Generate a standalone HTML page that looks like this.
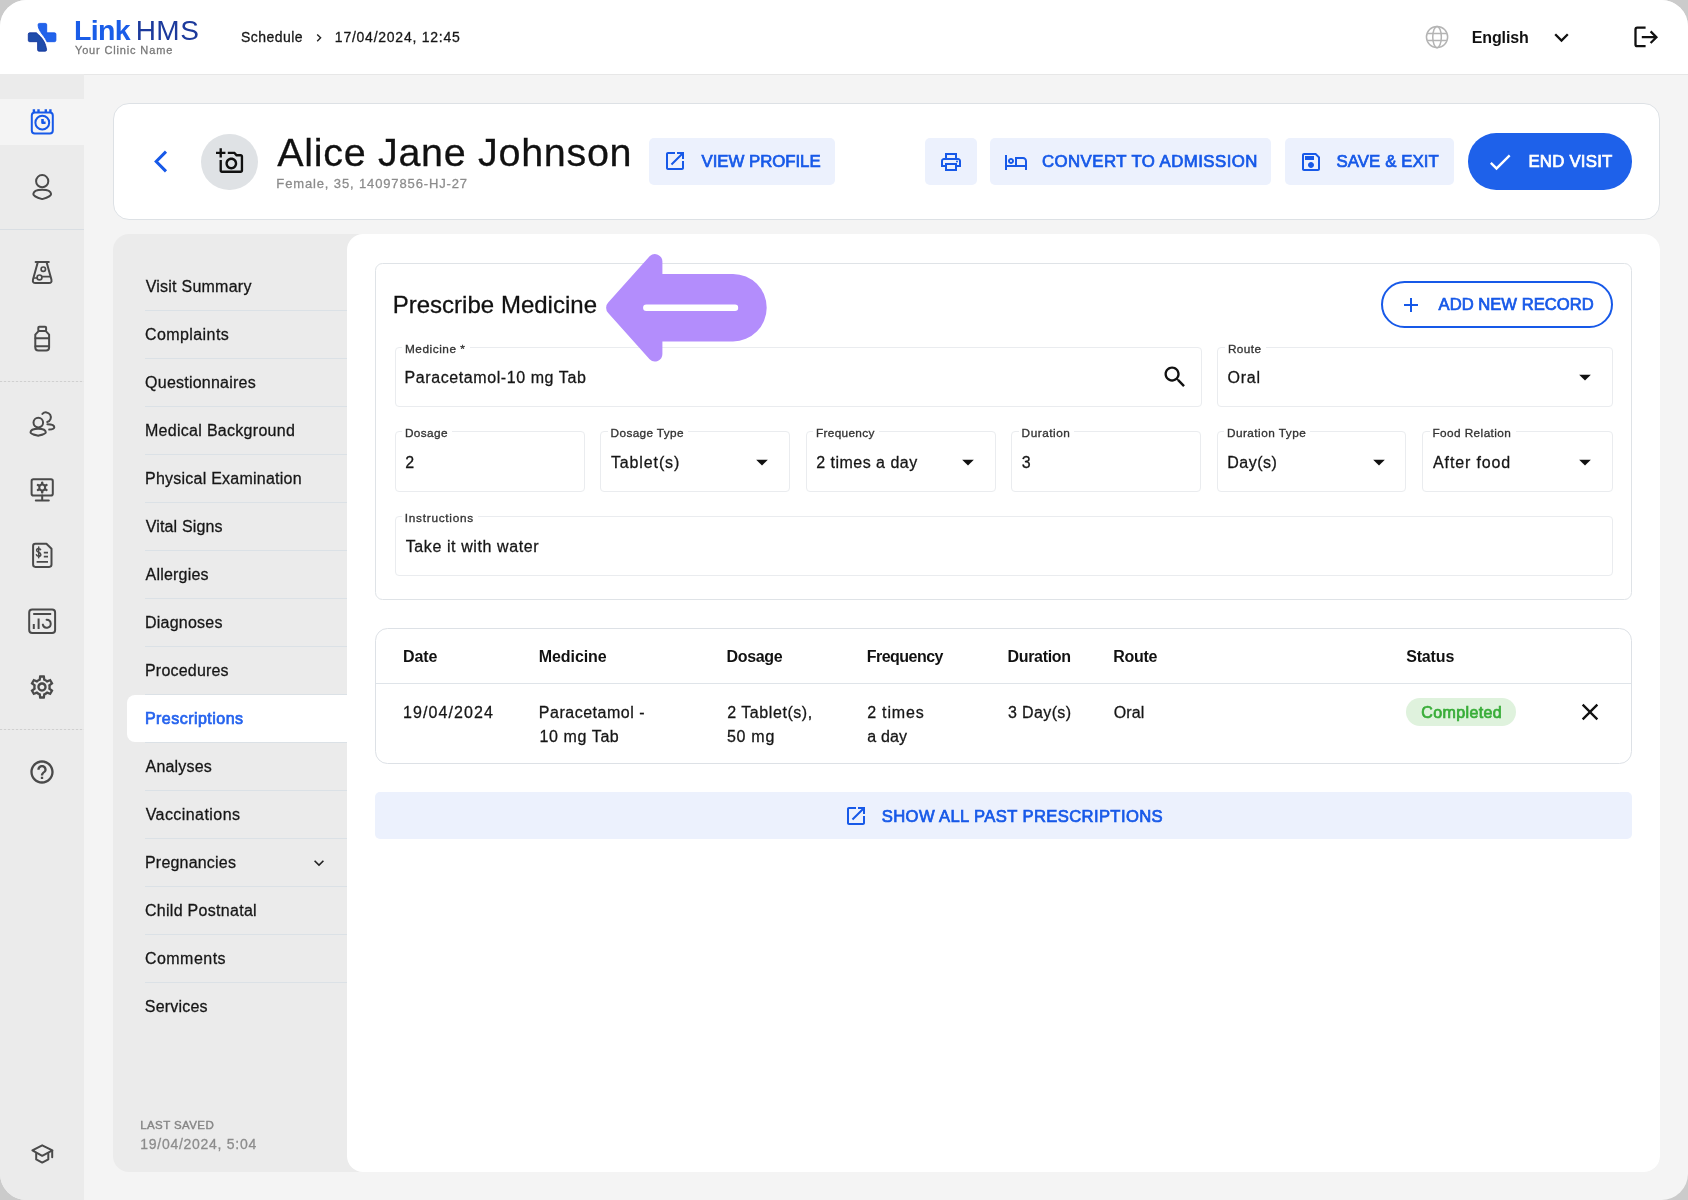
<!DOCTYPE html>
<html lang="en">
<head>
<meta charset="utf-8">
<title>Link HMS - Visit</title>
<style>
*{box-sizing:border-box;margin:0;padding:0}
html,body{width:1688px;height:1200px;overflow:hidden;background:#cbcbcb;font-family:"Liberation Sans",sans-serif;}
#app{position:absolute;left:0;top:0;width:1688px;height:1200px;background:#f4f4f4;border-radius:26.5px;overflow:hidden}
.abs{position:absolute}
.t{position:absolute;white-space:nowrap;line-height:1}
#tx{position:absolute;left:0;top:0;width:1688px;height:1200px;will-change:transform}
svg{position:absolute;overflow:visible}
.hdr{left:0;top:0;width:1688px;height:74.6px;background:#fff;border-bottom:1.4px solid #e7e7e7}
.side{left:0;top:74px;width:84px;height:1126px;background:#ebebeb}
.card{background:#fff;border:1px solid #e0e0e0}
.btn{background:#ecf1fd;border-radius:5px}
.fld{border:1px solid #eaecef;border-radius:4px;background:#fff}
.lbl{position:absolute;background:#fff;height:4px}
.hr{background:#dde2e7;height:1px}
</style>
</head>
<body>
<div id="app">
<!-- header -->
<div class="abs hdr"></div>
<!-- sidebar -->
<div class="abs side"></div>
<div class="abs" style="left:0;top:98.7px;width:84px;height:46.5px;background:#f4f4f4"></div>
<div class="abs hr" style="left:0;top:229px;width:84px;background:#d9dee3"></div>
<div class="abs" style="left:0;top:381px;width:84px;height:1px;background:repeating-linear-gradient(90deg,#d0d0d0 0 2px,#e6e6e6 2px 4px)"></div>
<div class="abs" style="left:0;top:729px;width:84px;height:1px;background:repeating-linear-gradient(90deg,#d0d0d0 0 2px,#e6e6e6 2px 4px)"></div>

<!-- patient card -->
<div class="abs card" style="left:112.8px;top:103px;width:1547.2px;height:117px;border-radius:16px;border-color:#dde1e5"></div>
<div class="abs" style="left:201.4px;top:133.5px;width:56.4px;height:56.4px;border-radius:50%;background:#dfe2e5"></div>
<div class="abs btn" style="left:649px;top:138px;width:186px;height:47px"></div>
<div class="abs btn" style="left:925px;top:138px;width:51.5px;height:47px"></div>
<div class="abs btn" style="left:990.4px;top:138px;width:280.5px;height:47px"></div>
<div class="abs btn" style="left:1284.8px;top:138px;width:169px;height:47px"></div>
<div class="abs" style="left:1467.5px;top:133.3px;width:164.5px;height:56.4px;border-radius:28.2px;background:#1e61ea"></div>

<!-- visit panel -->
<div class="abs" style="left:113px;top:234px;width:1547px;height:938px;border-radius:16px;background:#ebebeb"></div>
<div class="abs" style="left:347px;top:234px;width:1313px;height:938px;border-radius:16px;background:#fff"></div>
<div class="abs hr" style="left:145px;top:310px;width:202px;background:#dbe1e6"></div>
<div class="abs hr" style="left:145px;top:358px;width:202px;background:#dbe1e6"></div>
<div class="abs hr" style="left:145px;top:406px;width:202px;background:#dbe1e6"></div>
<div class="abs hr" style="left:145px;top:454px;width:202px;background:#dbe1e6"></div>
<div class="abs hr" style="left:145px;top:502px;width:202px;background:#dbe1e6"></div>
<div class="abs hr" style="left:145px;top:550px;width:202px;background:#dbe1e6"></div>
<div class="abs hr" style="left:145px;top:598px;width:202px;background:#dbe1e6"></div>
<div class="abs hr" style="left:145px;top:646px;width:202px;background:#dbe1e6"></div>
<div class="abs hr" style="left:145px;top:694px;width:202px;background:#dbe1e6"></div>
<div class="abs hr" style="left:145px;top:742px;width:202px;background:#dbe1e6"></div>
<div class="abs hr" style="left:145px;top:790px;width:202px;background:#dbe1e6"></div>
<div class="abs hr" style="left:145px;top:838px;width:202px;background:#dbe1e6"></div>
<div class="abs hr" style="left:145px;top:886px;width:202px;background:#dbe1e6"></div>
<div class="abs hr" style="left:145px;top:934px;width:202px;background:#dbe1e6"></div>
<div class="abs hr" style="left:145px;top:982px;width:202px;background:#dbe1e6"></div>
<!-- active nav -->
<div class="abs" style="left:127px;top:695px;width:221px;height:47px;border-radius:8px 0 0 8px;background:#fff"></div>

<!-- form card -->
<div class="abs card" style="left:375.2px;top:262.5px;width:1256.6px;height:337px;border-radius:7.5px;border-color:#dfe3e7"></div>
<div class="abs" style="left:1381px;top:281px;width:232px;height:47px;border-radius:24px;border:2px solid #1759e8;background:#fff"></div>
<div class="abs fld" style="left:394.5px;top:346.7px;width:807.5px;height:60.6px"></div>
<div class="abs fld" style="left:1217px;top:346.7px;width:395.7px;height:60.6px"></div>
<div class="abs fld" style="left:394.5px;top:431px;width:190.2px;height:60.6px"></div>
<div class="abs fld" style="left:600.2px;top:431px;width:190.3px;height:60.6px"></div>
<div class="abs fld" style="left:805.5px;top:431px;width:190px;height:60.6px"></div>
<div class="abs fld" style="left:1011px;top:431px;width:190.2px;height:60.6px"></div>
<div class="abs fld" style="left:1216.8px;top:431px;width:189.5px;height:60.6px"></div>
<div class="abs fld" style="left:1422px;top:431px;width:190.5px;height:60.6px"></div>
<div class="abs fld" style="left:394.5px;top:515.5px;width:1218.2px;height:60.6px"></div>
<!-- label notches -->
<div class="lbl" style="left:402px;top:345px;width:68px"></div>
<div class="lbl" style="left:1224.5px;top:345px;width:41px"></div>
<div class="lbl" style="left:402px;top:429px;width:50px"></div>
<div class="lbl" style="left:607.5px;top:429px;width:80px"></div>
<div class="lbl" style="left:813px;top:429px;width:66px"></div>
<div class="lbl" style="left:1018.5px;top:429px;width:55px"></div>
<div class="lbl" style="left:1224.3px;top:429px;width:86px"></div>
<div class="lbl" style="left:1429.5px;top:429px;width:86px"></div>
<div class="lbl" style="left:402px;top:514px;width:76px"></div>

<!-- table card -->
<div class="abs card" style="left:375.2px;top:628.3px;width:1256.6px;height:135.6px;border-radius:12.5px;border-color:#dde1e6"></div>
<div class="abs hr" style="left:376px;top:683px;width:1255px;background:#dfe4e9"></div>
<div class="abs" style="left:1406.4px;top:698.3px;width:109.5px;height:28px;border-radius:14px;background:#dff2dd"></div>
<!-- show all -->
<div class="abs btn" style="left:375px;top:792px;width:1257px;height:47px;border-radius:5px"></div>

<svg style="left:0;top:0" width="84" height="74" viewBox="0 0 84 74"><path fill="#2263ea" stroke="#0d4fe6" stroke-width="0.8" d="M39.5 23.4H45.3Q46.7 23.4 46.7 24.8V32.8H54.5Q55.9 32.8 55.9 34.2V40.3Q55.9 41.7 54.5 41.7H46.9C45.3 37.6 42.4 35 40.4 31.6 38.8 28.9 38.1 27 38.1 24.8Q38.1 23.4 39.5 23.4Z"/><path fill="#1f4cab" stroke="#0a2c98" stroke-width="0.8" d="M29.7 32.8H36.4C38.8 35 41.5 37.2 43.5 40.6 45.4 43.9 46.2 46.9 46.6 49.8Q46.6 51.2 45.2 51.2H39Q37.6 51.2 37.6 49.8V41.7H29.7Q28.3 41.7 28.3 40.3V34.2Q28.3 32.8 29.7 32.8Z"/></svg>
<svg style="left:0;top:0" width="400" height="74"><path d="M317.2 34.4 L320.6 37.8 L317.2 41.2" fill="none" stroke="#222" stroke-width="1.4"/></svg>
<svg style="left:1420px;top:20px" width="35" height="35"><g fill="none" stroke="#b4b4b4" stroke-width="1.5"><circle cx="17.05" cy="17.05" r="10.6"/><ellipse cx="17.05" cy="17.05" rx="4.3" ry="10.6"/><path d="M7.2 13.6H26.9 M7.2 20.5H26.9"/></g></svg>
<svg style="left:1400px;top:0" width="288" height="74"><g fill="none" stroke="#111" stroke-width="2.3"><path d="M155.2 34.2 L161.5 40.6 L167.8 34.2" stroke-linecap="butt"/><path d="M245.6 27.6 H237.3 Q235.5 27.6 235.5 29.4 V44.4 Q235.5 46.2 237.3 46.2 H245.6" /><path d="M241.8 37.2 H256 M250.6 31.4 L256.4 37.2 L250.6 43"/></g></svg>
<svg style="left:140px;top:140px" width="40" height="44"><path d="M26 11.6 L16.2 21.5 L26 31.4" fill="none" stroke="#1759e8" stroke-width="3"/></svg>
<svg style="left:215.5px;top:147.4px" width="28.3" height="28.3" viewBox="0 0 24 24"><path fill="#111" d="M21 6h-3.17L16 4h-6v2h5.12l1.83 2H21v12H5v-9H3v9c0 1.1.9 2 2 2h16c1.1 0 2-.9 2-2V8c0-1.1-.9-2-2-2zM8 14c0 2.76 2.24 5 5 5s5-2.24 5-5-2.24-5-5-5-5 2.24-5 5zm5-3c1.65 0 3 1.35 3 3s-1.35 3-3 3-3-1.35-3-3 1.35-3 3-3zM5 6h3V4H5V1H3v3H0v2h3v3h2z"/></svg>
<svg style="left:663px;top:149px" width="24" height="24" viewBox="0 0 24 24"><path fill="#1759e8" d="M19 19H5V5h7V3H5c-1.11 0-2 .9-2 2v14c0 1.1.89 2 2 2h14c1.1 0 2-.9 2-2v-7h-2v7zM14 3v2h3.59l-9.83 9.83 1.41 1.41L19 6.41V10h2V3h-7z"/></svg>
<svg style="left:938.6px;top:150px" width="24" height="24" viewBox="0 0 24 24"><path fill="#1759e8" d="M19 8h-1V3H6v5H5c-1.66 0-3 1.34-3 3v6h4v4h12v-4h4v-6c0-1.66-1.34-3-3-3zM8 5h8v3H8V5zm8 12v2H8v-4h8v2zm2-2v-2H6v2H4v-4c0-.55.45-1 1-1h14c.55 0 1 .45 1 1v4h-2z"/><circle cx="18" cy="11.5" r="1" fill="#1759e8"/></svg>
<svg style="left:1004px;top:149.8px" width="24" height="24" viewBox="0 0 24 24"><path fill="#1759e8" d="M7 14c1.66 0 3-1.34 3-3S8.66 8 7 8s-3 1.34-3 3 1.34 3 3 3zm0-4c.55 0 1 .45 1 1s-.45 1-1 1-1-.45-1-1 .45-1 1-1zm12-3h-8v8H3V5H1v15h2v-3h18v3h2v-9c0-2.21-1.79-4-4-4zm2 8h-8V9h6c1.1 0 2 .9 2 2v4z"/></svg>
<svg style="left:1298.8px;top:149.5px" width="24" height="24" viewBox="0 0 24 24"><path fill="#1759e8" d="M17 3H5c-1.11 0-2 .9-2 2v14c0 1.1.89 2 2 2h14c1.1 0 2-.9 2-2V7l-4-4zm2 16H5V5h11.17L19 7.83V19zm-7-7c-1.66 0-3 1.34-3 3s1.34 3 3 3 3-1.34 3-3-1.34-3-3-3zM6 6h9v4H6z"/></svg>
<svg style="left:1486.4px;top:148px" width="28" height="28" viewBox="0 0 24 24"><path fill="#fff" d="M9 16.17L4.83 12l-1.42 1.41L9 19 21 7l-1.41-1.41z"/></svg>
<svg style="left:1399.3px;top:292.5px" width="24" height="24" viewBox="0 0 24 24"><path fill="#1759e8" d="M19 13h-6v6h-2v-6H5v-2h6V5h2v6h6v2z"/></svg>
<svg style="left:1160.5px;top:363.1px" width="28" height="28" viewBox="0 0 24 24"><path fill="#111" d="M15.5 14h-.79l-.28-.27C15.41 12.59 16 11.11 16 9.5 16 5.91 13.09 3 9.5 3S3 5.91 3 9.5 5.91 16 9.5 16c1.61 0 3.09-.59 4.23-1.57l.27.28v.79l5 4.99L20.49 19l-4.99-5zm-6 0C7.01 14 5 11.99 5 9.5S7.01 5 9.5 5 14 7.01 14 9.5 11.99 14 9.5 14z"/></svg>
<svg style="left:1570.5px;top:363.09999999999997px" width="28" height="28" viewBox="0 0 24 24"><path fill="#111" d="M7 10l5 5 5-5z"/></svg>
<svg style="left:748.2px;top:447.59999999999997px" width="28" height="28" viewBox="0 0 24 24"><path fill="#111" d="M7 10l5 5 5-5z"/></svg>
<svg style="left:954px;top:447.59999999999997px" width="28" height="28" viewBox="0 0 24 24"><path fill="#111" d="M7 10l5 5 5-5z"/></svg>
<svg style="left:1365px;top:447.59999999999997px" width="28" height="28" viewBox="0 0 24 24"><path fill="#111" d="M7 10l5 5 5-5z"/></svg>
<svg style="left:1570.5px;top:447.59999999999997px" width="28" height="28" viewBox="0 0 24 24"><path fill="#111" d="M7 10l5 5 5-5z"/></svg>
<svg style="left:1575.6px;top:698.4px" width="28" height="28" viewBox="0 0 24 24"><path fill="#111" d="M19 6.41L17.59 5 12 10.59 6.41 5 5 6.41 10.59 12 5 17.59 6.41 19 12 13.41 17.59 19 19 17.59 13.41 12z"/></svg>
<svg style="left:843.7px;top:803.6px" width="24" height="24" viewBox="0 0 24 24"><path fill="#1759e8" d="M19 19H5V5h7V3H5c-1.11 0-2 .9-2 2v14c0 1.1.89 2 2 2h14c1.1 0 2-.9 2-2v-7h-2v7zM14 3v2h3.59l-9.83 9.83 1.41 1.41L19 6.41V10h2V3h-7z"/></svg>
<svg style="left:308.6px;top:852.7px" width="20" height="20" viewBox="0 0 24 24"><path fill="#222" d="M16.59 8.59L12 13.17 7.41 8.59 6 10l6 6 6-6z"/></svg>
<svg style="left:590px;top:240px" width="200" height="140"><path fill="#b38dfc" d="M72.4 34 H143 A33.7 33.7 0 0 1 143 101.4 H72.4 V114 A7.5 7.5 0 0 1 59.6 119.3 L18.2 73 A7.5 7.5 0 0 1 18.2 62.6 L59.6 16.3 A7.5 7.5 0 0 1 72.4 21.6 Z"/><path d="M56.3 67.8 H145" stroke="#fff" stroke-width="6.4" stroke-linecap="round"/></svg>
<svg style="left:0;top:0" width="84" height="1200">
<g fill="none" stroke="#1759e8" stroke-width="2" stroke-linecap="round" stroke-linejoin="round" stroke-width="2.3"><rect x="31.8" y="112.6" width="21" height="21" rx="3"/><path d="M33.9 109.3V112 M38.5 109.3V112 M45.8 109.3V112 M50.4 109.3V112" stroke-linecap="butt" stroke-width="2.4"/><circle cx="42.3" cy="122.7" r="6.9"/><path d="M42.5 119V122.7H45.6" stroke-width="2.6" stroke-linecap="butt"/></g>
<g fill="none" stroke="#4a4a4a" stroke-width="2" stroke-linecap="round" stroke-linejoin="round"><circle cx="42.2" cy="181.2" r="6.1"/><path d="M33.3 194C33.6 190.6 38 189.7 42.2 189.7S50.8 190.6 51.1 194C51.3 196.4 46.6 197.8 42.2 199.1C37.8 197.8 33.1 196.4 33.3 194Z"/></g>
<g fill="none" stroke="#4a4a4a" stroke-width="2" stroke-linecap="round" stroke-linejoin="round"><path d="M35.6 262H48.8" /><path d="M37.8 262.3L33 279.6Q32.2 283.1 35.6 283.1H48.8Q52.2 283.1 51.4 279.6L46.6 262.3"/><circle cx="43.3" cy="269.2" r="2.2" stroke-width="1.7"/><circle cx="39.5" cy="277.4" r="2.4" stroke-width="1.7"/><path d="M42.2 276.7H49.6 M34.6 278H36.8" stroke-width="1.7"/></g>
<g fill="none" stroke="#4a4a4a" stroke-width="2" stroke-linecap="round" stroke-linejoin="round"><rect x="38.3" y="326.7" width="7.8" height="4.4" rx="1"/><path d="M38.3 331.3L35.3 334.6V347.4Q35.3 350.4 38.3 350.4H46.1Q49.1 350.4 49.1 347.4V334.6L46.1 331.3"/><path d="M35.5 338.2H49 M35.5 346.2H49"/></g>
<g fill="none" stroke="#4a4a4a" stroke-width="2" stroke-linecap="round" stroke-linejoin="round"><circle cx="38.3" cy="422.6" r="4.8"/><path d="M30.5 432.2C30.7 429.4 34.6 428.7 38.2 428.7S45.6 429.4 45.8 432.2C45.9 434 42 434.8 38.2 435.7C34.4 434.8 30.4 434 30.5 432.2Z"/><path d="M42.4 413.9A4.9 4.9 0 1 1 47.2 422"/><path d="M47.4 424.2C51 424.2 54.3 425.2 54.3 427.2C54.3 428.6 51.6 429.4 49.2 429.6"/></g>
<g fill="none" stroke="#4a4a4a" stroke-width="2" stroke-linecap="round" stroke-linejoin="round"><rect x="31.6" y="479.3" width="21.2" height="16.2" rx="1.8"/><path d="M42.2 495.6V500.2 M35.8 500.6H48.8"/><circle cx="42.2" cy="487.5" r="2.9" stroke-width="2"/><path d="M42.2 483.6V482.6 M42.2 491.4V492.4 M45.6 485.5L46.5 485 M38.8 489.5L37.9 490 M45.6 489.5L46.5 490 M38.8 485.5L37.9 485" stroke-width="2.4"/></g>
<g fill="none" stroke="#4a4a4a" stroke-width="2" stroke-linecap="round" stroke-linejoin="round"><path d="M35.4 543.7H46.4L51.5 548.8V564.6Q51.5 566.9 49.2 566.9H35.4Q33.1 566.9 33.1 564.6V546Q33.1 543.7 35.4 543.7Z"/><path d="M43.8 552.6H48 M43.8 556.6H48 M36.6 561.8H48" stroke-width="1.8" stroke-linecap="butt"/><path d="M40.6 549.6C40.2 548.7 39.4 548.4 38.6 548.4C37.4 548.4 36.6 549.2 36.6 550.2C36.6 552.6 40.8 551.8 40.8 554.4C40.8 555.5 39.9 556.3 38.7 556.3C37.6 556.3 36.8 555.8 36.4 554.8 M38.7 547V557.8" stroke-width="1.5"/></g>
<g fill="none" stroke="#4a4a4a" stroke-width="2" stroke-linecap="round" stroke-linejoin="round"><rect x="29.2" y="609.4" width="25.9" height="23.6" rx="3"/><path d="M33.2 613.9H51.2 M33.8 624V629 M38.6 618.4V629" stroke-linecap="butt"/><path d="M46.6 619.7A4 4 0 1 1 42.8 624.6"/></g>
</svg>
<svg style="left:28.2px;top:672.5px" width="28" height="28" viewBox="0 0 24 24"><path fill="#4a4a4a" d="M19.43 12.98c.04-.32.07-.64.07-.98 0-.34-.03-.66-.07-.98l2.11-1.65c.19-.15.24-.42.12-.64l-2-3.46c-.09-.16-.26-.25-.44-.25-.06 0-.12.01-.17.03l-2.49 1c-.52-.4-1.08-.73-1.69-.98l-.38-2.65C14.46 2.18 14.25 2 14 2h-4c-.25 0-.46.18-.49.42l-.38 2.65c-.61.25-1.17.59-1.69.98l-2.49-1c-.06-.02-.12-.03-.18-.03-.17 0-.34.09-.43.25l-2 3.46c-.13.22-.07.49.12.64l2.11 1.65c-.04.32-.07.65-.07.98 0 .33.03.66.07.98l-2.11 1.65c-.19.15-.24.42-.12.64l2 3.46c.09.16.26.25.44.25.06 0 .12-.01.17-.03l2.49-1c.52.4 1.08.73 1.69.98l.38 2.65c.03.24.24.42.49.42h4c.25 0 .46-.18.49-.42l.38-2.65c.61-.25 1.17-.59 1.69-.98l2.49 1c.06.02.12.03.18.03.17 0 .34-.09.43-.25l2-3.46c.12-.22.07-.49-.12-.64l-2.11-1.65zm-1.98-1.71c.04.31.05.52.05.73 0 .21-.02.43-.05.73l-.14 1.13.89.7 1.08.84-.7 1.21-1.27-.51-1.04-.42-.9.68c-.43.32-.84.56-1.25.73l-1.06.43-.16 1.13-.2 1.35h-1.4l-.19-1.35-.16-1.13-1.06-.43c-.43-.18-.83-.41-1.23-.71l-.91-.7-1.06.43-1.27.51-.7-1.21 1.08-.84.89-.7-.14-1.13c-.03-.31-.05-.54-.05-.74s.02-.43.05-.73l.14-1.13-.89-.7-1.08-.84.7-1.21 1.27.51 1.04.42.9-.68c.43-.32.84-.56 1.25-.73l1.06-.43.16-1.13.2-1.35h1.39l.19 1.35.16 1.13 1.06.43c.43.18.83.41 1.23.71l.91.7 1.06-.43 1.27-.51.7 1.21-1.07.85-.89.7.14 1.13zM12 8c-2.21 0-4 1.79-4 4s1.79 4 4 4 4-1.79 4-4-1.79-4-4-4zm0 6c-1.1 0-2-.9-2-2s.9-2 2-2 2 .9 2 2-.9 2-2 2z"/></svg>
<svg style="left:28px;top:757.8px" width="28" height="28" viewBox="0 0 24 24"><path fill="#4a4a4a" d="M11 18h2v-2h-2v2zm1-16C6.48 2 2 6.48 2 12s4.48 10 10 10 10-4.48 10-10S17.52 2 12 2zm0 18c-4.41 0-8-3.59-8-8s3.59-8 8-8 8 3.59 8 8-3.59 8-8 8zm0-14c-2.21 0-4 1.79-4 4h2c0-1.1.9-2 2-2s2 .9 2 2c0 2-3 1.75-3 5h2c0-2.25 3-2.5 3-5 0-2.21-1.79-4-4-4z"/></svg>
<svg style="left:0;top:1130px" width="84" height="50"><g fill="none" stroke="#4a4a4a" stroke-width="2" stroke-linecap="round" stroke-linejoin="round"><path d="M42.2 15.3L32.4 20.4L42.2 25.8L52.4 20.4Z"/><path d="M36.2 23.4V29.4L42.2 32.6L48.3 29.4V23.4 M52.2 21V27.2"/></g></svg>
<div id="tx">
<div class="t" style="left:73.99px;top:16px;font-size:28.5px;font-weight:700;color:#1a5de8;letter-spacing:-0.687px;">Link</div>
<div class="t" style="left:135.66px;top:17px;font-size:28px;font-weight:400;color:#1c3a9c;letter-spacing:0.468px;-webkit-text-stroke:0;">HMS</div>
<div class="t" style="left:74.96px;top:45px;font-size:11px;font-weight:400;color:#777;letter-spacing:0.849px;-webkit-text-stroke:0.28px;">Your Clinic Name</div>
<div class="t" style="left:241.09px;top:30px;font-size:14px;font-weight:400;color:#161616;letter-spacing:0.431px;-webkit-text-stroke:0.28px;">Schedule</div>
<div class="t" style="left:334.85px;top:30px;font-size:14px;font-weight:400;color:#161616;letter-spacing:0.753px;-webkit-text-stroke:0.28px;">17/04/2024, 12:45</div>
<div class="t" style="left:1471.73px;top:30px;font-size:16px;font-weight:700;color:#111;letter-spacing:-0.122px;">English</div>
<div class="t" style="left:277.23px;top:133px;font-size:39.5px;font-weight:400;color:#111;letter-spacing:0.694px;-webkit-text-stroke:0.28px;">Alice Jane Johnson</div>
<div class="t" style="left:276.33px;top:177px;font-size:13px;font-weight:400;color:#8c8c8c;letter-spacing:0.866px;-webkit-text-stroke:0.28px;">Female, 35, 14097856-HJ-27</div>
<div class="t" style="left:701.55px;top:154px;font-size:16.8px;font-weight:400;color:#1759e8;letter-spacing:-0.026px;-webkit-text-stroke:0.72px;">VIEW PROFILE</div>
<div class="t" style="left:1041.91px;top:154px;font-size:16.8px;font-weight:400;color:#1759e8;letter-spacing:0.465px;-webkit-text-stroke:0.72px;">CONVERT TO ADMISSION</div>
<div class="t" style="left:1336.43px;top:154px;font-size:16.8px;font-weight:400;color:#1759e8;letter-spacing:0.106px;-webkit-text-stroke:0.72px;">SAVE &amp; EXIT</div>
<div class="t" style="left:1528.38px;top:154px;font-size:16.8px;font-weight:400;color:#fff;letter-spacing:0.240px;-webkit-text-stroke:0.72px;">END VISIT</div>
<div class="t" style="left:145.64px;top:279px;font-size:16px;font-weight:400;color:#161616;letter-spacing:0.246px;-webkit-text-stroke:0.28px;">Visit Summary</div>
<div class="t" style="left:144.91px;top:327px;font-size:16px;font-weight:400;color:#161616;letter-spacing:0.429px;-webkit-text-stroke:0.28px;">Complaints</div>
<div class="t" style="left:145.08px;top:375px;font-size:16px;font-weight:400;color:#161616;letter-spacing:0.227px;-webkit-text-stroke:0.28px;">Questionnaires</div>
<div class="t" style="left:144.99px;top:423px;font-size:16px;font-weight:400;color:#161616;letter-spacing:0.291px;-webkit-text-stroke:0.28px;">Medical Background</div>
<div class="t" style="left:144.99px;top:471px;font-size:16px;font-weight:400;color:#161616;letter-spacing:0.239px;-webkit-text-stroke:0.28px;">Physical Examination</div>
<div class="t" style="left:145.64px;top:519px;font-size:16px;font-weight:400;color:#161616;letter-spacing:0.164px;-webkit-text-stroke:0.28px;">Vital Signs</div>
<div class="t" style="left:145.57px;top:567px;font-size:16px;font-weight:400;color:#161616;letter-spacing:0.195px;-webkit-text-stroke:0.28px;">Allergies</div>
<div class="t" style="left:144.99px;top:615px;font-size:16px;font-weight:400;color:#161616;letter-spacing:0.225px;-webkit-text-stroke:0.28px;">Diagnoses</div>
<div class="t" style="left:144.99px;top:663px;font-size:16px;font-weight:400;color:#161616;letter-spacing:0.200px;-webkit-text-stroke:0.28px;">Procedures</div>
<div class="t" style="left:144.91px;top:711px;font-size:16px;font-weight:400;color:#2563ee;letter-spacing:0.469px;-webkit-text-stroke:0.72px;">Prescriptions</div>
<div class="t" style="left:145.57px;top:759px;font-size:16px;font-weight:400;color:#161616;letter-spacing:0.189px;-webkit-text-stroke:0.28px;">Analyses</div>
<div class="t" style="left:145.64px;top:807px;font-size:16px;font-weight:400;color:#161616;letter-spacing:0.437px;-webkit-text-stroke:0.28px;">Vaccinations</div>
<div class="t" style="left:144.99px;top:855px;font-size:16px;font-weight:400;color:#161616;letter-spacing:0.196px;-webkit-text-stroke:0.28px;">Pregnancies</div>
<div class="t" style="left:144.91px;top:903px;font-size:16px;font-weight:400;color:#161616;letter-spacing:0.295px;-webkit-text-stroke:0.28px;">Child Postnatal</div>
<div class="t" style="left:144.91px;top:951px;font-size:16px;font-weight:400;color:#161616;letter-spacing:0.474px;-webkit-text-stroke:0.28px;">Comments</div>
<div class="t" style="left:144.81px;top:999px;font-size:16px;font-weight:400;color:#161616;letter-spacing:0.203px;-webkit-text-stroke:0.28px;">Services</div>
<div class="t" style="left:140.17px;top:1120px;font-size:11.5px;font-weight:400;color:#858585;letter-spacing:0.412px;-webkit-text-stroke:0.4px;">LAST SAVED</div>
<div class="t" style="left:140.32px;top:1137px;font-size:14px;font-weight:400;color:#8c8c8c;letter-spacing:0.723px;-webkit-text-stroke:0.28px;">19/04/2024, 5:04</div>
<div class="t" style="left:392.69px;top:293px;font-size:24px;font-weight:400;color:#111;letter-spacing:0.016px;-webkit-text-stroke:0.28px;">Prescribe Medicine</div>
<div class="t" style="left:1438.55px;top:297px;font-size:16.6px;font-weight:400;color:#1759e8;letter-spacing:0.017px;-webkit-text-stroke:0.72px;">ADD NEW RECORD</div>
<div class="t" style="left:404.94px;top:344px;font-size:11.8px;font-weight:400;color:#333;letter-spacing:0.547px;-webkit-text-stroke:0.32px;">Medicine *</div>
<div class="t" style="left:1227.89px;top:344px;font-size:11.8px;font-weight:400;color:#333;letter-spacing:0.452px;-webkit-text-stroke:0.32px;">Route</div>
<div class="t" style="left:404.94px;top:428px;font-size:11.8px;font-weight:400;color:#333;letter-spacing:0.385px;-webkit-text-stroke:0.32px;">Dosage</div>
<div class="t" style="left:610.62px;top:428px;font-size:11.8px;font-weight:400;color:#333;letter-spacing:0.353px;-webkit-text-stroke:0.32px;">Dosage Type</div>
<div class="t" style="left:815.94px;top:428px;font-size:11.8px;font-weight:400;color:#333;letter-spacing:0.343px;-webkit-text-stroke:0.32px;">Frequency</div>
<div class="t" style="left:1021.60px;top:428px;font-size:11.8px;font-weight:400;color:#333;letter-spacing:0.517px;-webkit-text-stroke:0.32px;">Duration</div>
<div class="t" style="left:1226.94px;top:428px;font-size:11.8px;font-weight:400;color:#333;letter-spacing:0.465px;-webkit-text-stroke:0.32px;">Duration Type</div>
<div class="t" style="left:1432.40px;top:428px;font-size:11.8px;font-weight:400;color:#333;letter-spacing:0.421px;-webkit-text-stroke:0.32px;">Food Relation</div>
<div class="t" style="left:404.76px;top:513px;font-size:11.8px;font-weight:400;color:#333;letter-spacing:0.737px;-webkit-text-stroke:0.32px;">Instructions</div>
<div class="t" style="left:404.59px;top:370px;font-size:16px;font-weight:400;color:#161616;letter-spacing:0.583px;-webkit-text-stroke:0.28px;">Paracetamol-10 mg Tab</div>
<div class="t" style="left:1227.57px;top:370px;font-size:16px;font-weight:400;color:#161616;letter-spacing:0.725px;-webkit-text-stroke:0.28px;">Oral</div>
<div class="t" style="left:405.13px;top:455px;font-size:16px;font-weight:400;color:#161616;letter-spacing:0.000px;-webkit-text-stroke:0.28px;">2</div>
<div class="t" style="left:610.89px;top:455px;font-size:16px;font-weight:400;color:#161616;letter-spacing:0.886px;-webkit-text-stroke:0.28px;">Tablet(s)</div>
<div class="t" style="left:816.13px;top:455px;font-size:16px;font-weight:400;color:#161616;letter-spacing:0.491px;-webkit-text-stroke:0.28px;">2 times a day</div>
<div class="t" style="left:1021.70px;top:455px;font-size:16px;font-weight:400;color:#161616;letter-spacing:0.000px;-webkit-text-stroke:0.28px;">3</div>
<div class="t" style="left:1227.17px;top:455px;font-size:16px;font-weight:400;color:#161616;letter-spacing:0.537px;-webkit-text-stroke:0.28px;">Day(s)</div>
<div class="t" style="left:1433.08px;top:455px;font-size:16px;font-weight:400;color:#161616;letter-spacing:0.868px;-webkit-text-stroke:0.28px;">After food</div>
<div class="t" style="left:405.68px;top:539px;font-size:16px;font-weight:400;color:#161616;letter-spacing:0.604px;-webkit-text-stroke:0.28px;">Take it with water</div>
<div class="t" style="left:402.91px;top:649px;font-size:16px;font-weight:700;color:#111;letter-spacing:-0.062px;">Date</div>
<div class="t" style="left:538.73px;top:649px;font-size:16px;font-weight:700;color:#111;letter-spacing:-0.067px;">Medicine</div>
<div class="t" style="left:726.57px;top:649px;font-size:16px;font-weight:700;color:#111;letter-spacing:-0.336px;">Dosage</div>
<div class="t" style="left:866.83px;top:649px;font-size:16px;font-weight:700;color:#111;letter-spacing:-0.534px;">Frequency</div>
<div class="t" style="left:1007.57px;top:649px;font-size:16px;font-weight:700;color:#111;letter-spacing:-0.341px;">Duration</div>
<div class="t" style="left:1113.37px;top:649px;font-size:16px;font-weight:700;color:#111;letter-spacing:-0.344px;">Route</div>
<div class="t" style="left:1406.14px;top:649px;font-size:16px;font-weight:700;color:#111;letter-spacing:-0.143px;">Status</div>
<div class="t" style="left:402.96px;top:705px;font-size:16px;font-weight:400;color:#161616;letter-spacing:1.084px;-webkit-text-stroke:0.28px;">19/04/2024</div>
<div class="t" style="left:538.82px;top:705px;font-size:16px;font-weight:400;color:#161616;letter-spacing:0.514px;-webkit-text-stroke:0.28px;">Paracetamol -</div>
<div class="t" style="left:539.59px;top:729px;font-size:16px;font-weight:400;color:#161616;letter-spacing:0.596px;-webkit-text-stroke:0.28px;">10 mg Tab</div>
<div class="t" style="left:727.13px;top:705px;font-size:16px;font-weight:400;color:#161616;letter-spacing:0.565px;-webkit-text-stroke:0.28px;">2 Tablet(s),</div>
<div class="t" style="left:726.98px;top:729px;font-size:16px;font-weight:400;color:#161616;letter-spacing:0.710px;-webkit-text-stroke:0.28px;">50 mg</div>
<div class="t" style="left:867.13px;top:705px;font-size:16px;font-weight:400;color:#161616;letter-spacing:0.824px;-webkit-text-stroke:0.28px;">2 times</div>
<div class="t" style="left:867.35px;top:729px;font-size:16px;font-weight:400;color:#161616;letter-spacing:0.142px;-webkit-text-stroke:0.28px;">a day</div>
<div class="t" style="left:1008.00px;top:705px;font-size:16px;font-weight:400;color:#161616;letter-spacing:0.374px;-webkit-text-stroke:0.28px;">3 Day(s)</div>
<div class="t" style="left:1113.73px;top:705px;font-size:16px;font-weight:400;color:#161616;letter-spacing:0.086px;-webkit-text-stroke:0.28px;">Oral</div>
<div class="t" style="left:1421.33px;top:705px;font-size:16px;font-weight:400;color:#38ad38;letter-spacing:0.368px;-webkit-text-stroke:0.72px;">Completed</div>
<div class="t" style="left:881.79px;top:809px;font-size:16.6px;font-weight:400;color:#1759e8;letter-spacing:0.386px;-webkit-text-stroke:0.72px;">SHOW ALL PAST PRESCRIPTIONS</div>
</div>
</div>

</body>
</html>
